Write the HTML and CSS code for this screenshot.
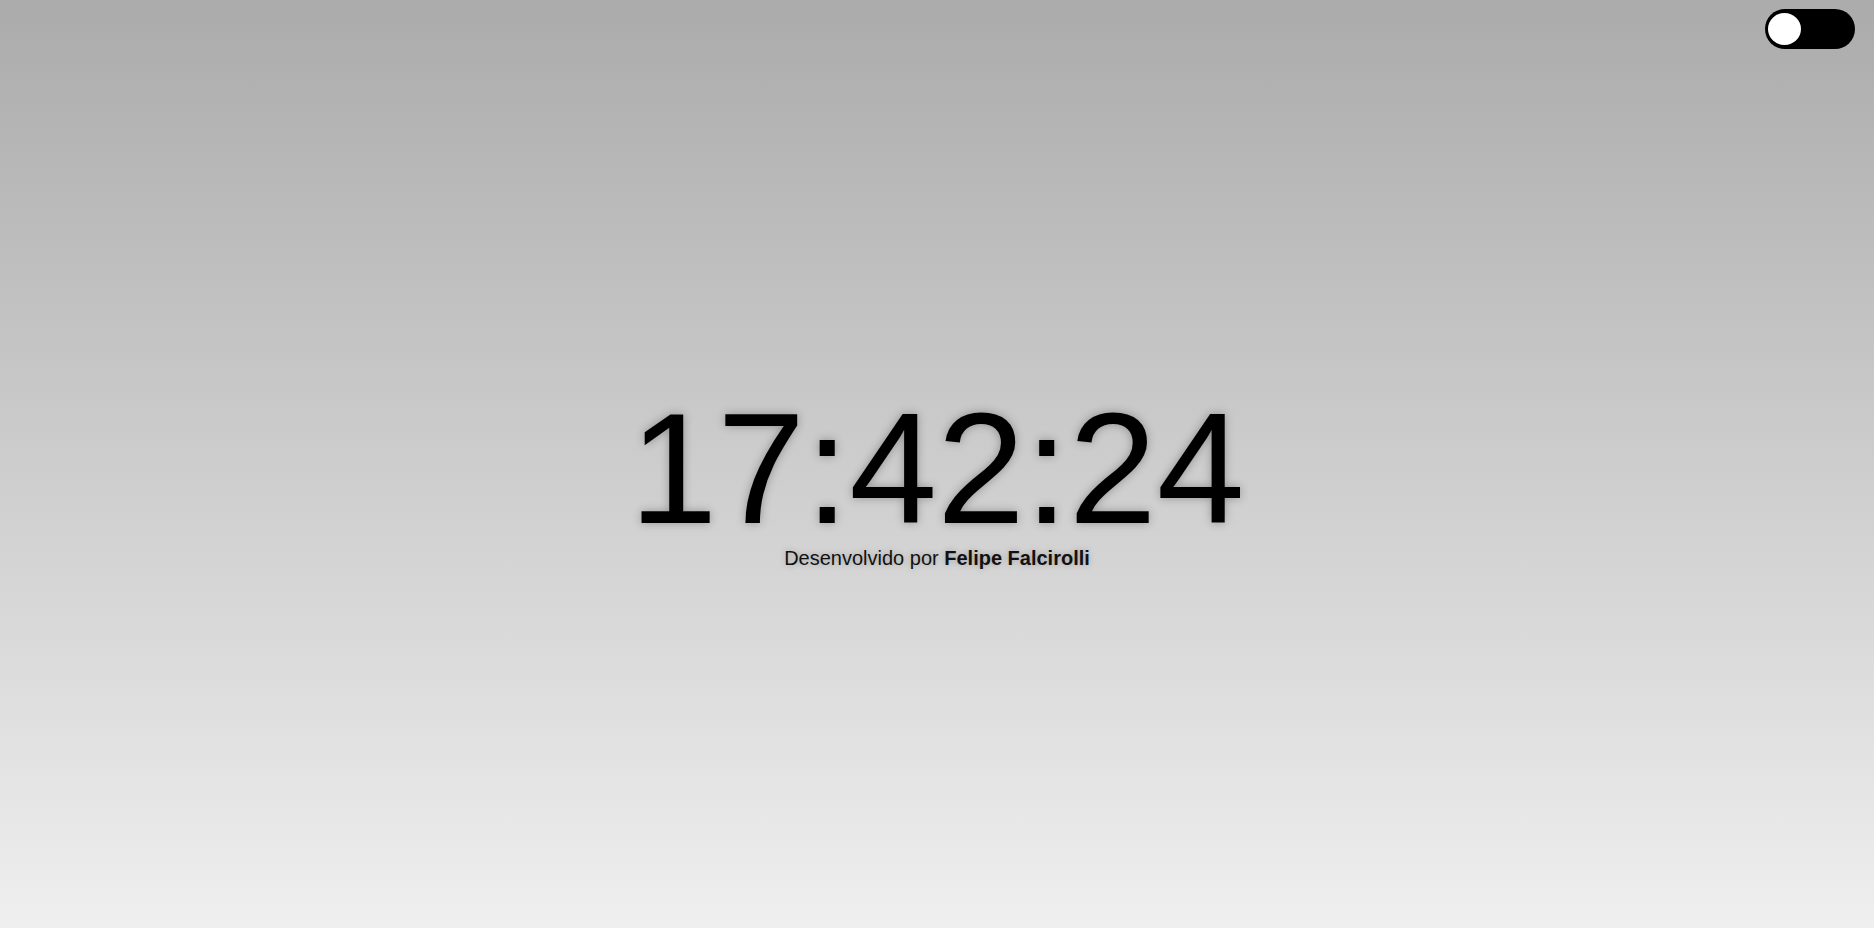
FILE: index.html
```html
<!DOCTYPE html>
<html lang="pt-BR">
<head>
<meta charset="utf-8">
<title>Relógio</title>
<link rel="stylesheet" href="styles.css">
</head>
<body>
<div class="page">
  <header class="topbar">
    <label class="switch">
      <input type="checkbox" class="switch-input">
      <span class="switch-track"><span class="switch-knob"></span></span>
    </label>
  </header>
  <main class="center">
    <div class="clock">17:42:24</div>
    <p class="credit">Desenvolvido por <strong>Felipe Falcirolli</strong></p>
  </main>
</div>
</body>
</html>
```

FILE: styles.css
```css
html, body {
  margin: 0;
  padding: 0;
  height: 100%;
}
body {
  font-family: "Liberation Sans", Arial, sans-serif;
  background: linear-gradient(to bottom, #ababab 0%, #efefef 100%);
  color: #000;
  overflow: hidden;
}
.page {
  position: relative;
  height: 100vh;
  display: flex;
  flex-direction: column;
}
.topbar {
  position: absolute;
  top: 9px;
  right: 19px;
}
.switch {
  display: block;
  width: 90px;
  height: 40px;
  cursor: pointer;
}
.switch-input {
  display: none;
}
.switch-track {
  display: block;
  box-sizing: border-box;
  width: 90px;
  height: 40px;
  border-radius: 20px;
  background: #000;
  position: relative;
}
.switch-knob {
  position: absolute;
  left: 3px;
  top: 4px;
  width: 33px;
  height: 32px;
  border-radius: 50%;
  background: #fff;
}
.center {
  flex: 1;
  display: flex;
  flex-direction: column;
  align-items: center;
  justify-content: center;
  padding-top: 30px;
}
.clock {
  font-size: 158px;
  line-height: 1;
  text-shadow: 0 0 10px rgba(0, 0, 0, 0.3);
}
.credit {
  margin: 0;
  font-size: 20px;
  line-height: 22px;
  color: #111;
  text-shadow: 0 0 6px rgba(0, 0, 0, 0.25);
}
.credit strong {
  font-weight: 700;
}
```
